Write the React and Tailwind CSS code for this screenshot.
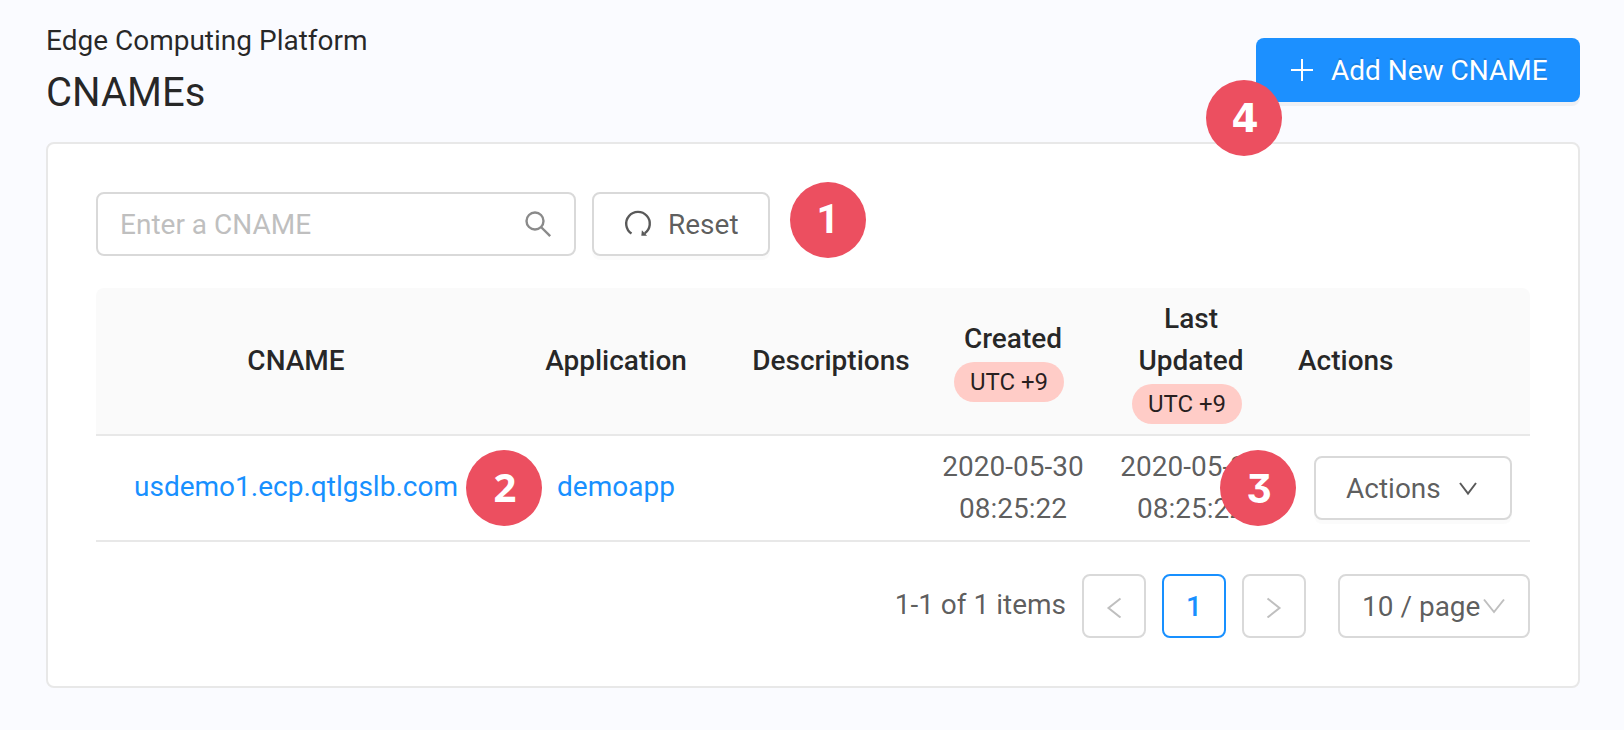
const shell = "flex items-center rounded-lg border-2 border-[#d9d9d9] bg-white";
const shadow = "shadow-[0_4px_0_rgba(0,0,0,0.016)]";

function Badge({ n, className }) {
  return (
    <span className={`absolute z-10 flex size-[76px] items-center justify-center rounded-full bg-[#ec4f60] leading-none font-bold text-white ${className}`}>
      {n}
    </span>
  );
}

function Chevron({ d, className }) {
  return (
    <svg viewBox="0 0 24 24" className={`size-6 shrink-0 ${className}`} fill="none" stroke="currentColor" strokeWidth="2">
      <path d={d} />
    </svg>
  );
}

function Tag() {
  return (
    <span className="mr-2 flex h-10 w-[110px] items-center justify-center rounded-full bg-[#ffccc7] text-2xl font-normal">
      UTC +9
    </span>
  );
}

export default function App() {
  return (
    <div className="h-[730px] w-[1624px] overflow-hidden bg-[#fafbff] pr-[44px] pl-[46px] font-[Roboto,sans-serif] text-[28px] leading-[42px] text-black/65">
      <header className="flex h-[142px] items-start justify-between text-black/85">
        <div className="pt-5">
          <p>Edge Computing Platform</p>
          <h1 className="mt-px text-[40px] leading-[60px]">CNAMEs</h1>
        </div>
        <div className="relative mt-[38px]">
          <button className="flex h-16 w-[324px] items-center rounded-lg bg-[#1c90ff] pl-[34px] text-white shadow-[0_4px_0_rgba(0,0,0,0.043)]">
            <svg viewBox="0 0 24 24" className="size-6 shrink-0" stroke="currentColor" strokeWidth="2">
              <path d="M12 1v22M1 12h22" />
            </svg>
            <span className="ml-[17px] pt-0.5 [text-shadow:0_-2px_0_rgba(0,0,0,0.12)]">Add New CNAME</span>
          </button>
          <Badge n="4" className="top-[42px] -left-[50px] pl-0.5 font-['DejaVu_Sans'] text-[39px]" />
        </div>
      </header>

      <main className="h-[546px] rounded-lg border-2 border-[#e8e8e8] bg-white px-12 pt-12">
        <div className="flex gap-4">
          <div className={`${shell} h-16 w-[480px] justify-between pr-[22px] pl-[22px]`}>
            <span className="pt-0.5 text-[#bfbfbf]">Enter a CNAME</span>
            <svg viewBox="0 0 28 28" className="size-7 text-[#8a8a8a]" fill="none" stroke="currentColor" strokeWidth="2.4">
              <circle cx="11" cy="11" r="8.5" />
              <path d="M17 17l9.200 9.200" />
            </svg>
          </div>
          <div className="relative">
            <button className={`${shell} ${shadow} h-16 w-[178px] pl-[30px]`}>
              <svg viewBox="0 0 28 28" className="size-7 shrink-0" fill="none" stroke="currentColor" strokeWidth="2.4">
                <path d="M7.500 23.500A11.800 11.800 0 1 1 20.800 23.300" />
                <path d="M17.300 25.800l.6-5.600 5.200 5.600z" fill="currentColor" stroke="none" />
              </svg>
              <span className="ml-4 pt-0.5">Reset</span>
            </button>
            <Badge n="1" className="-top-[10px] left-[198px] text-[40px]" />
          </div>
        </div>

        <table className="mt-8 w-[1434px] table-fixed border-separate border-spacing-0 text-center">
          <colgroup>
            <col className="w-[400px]" />
            <col className="w-[240px]" />
            <col className="w-[190px]" />
            <col className="w-[174px]" />
            <col className="w-[182px]" />
            <col className="w-[248px]" />
          </colgroup>
          <thead className="text-black/85 [&_th]:border-b-2 [&_th]:border-[#e8e8e8] [&_th]:bg-[#fafafa] [&_th]:font-medium">
            <tr className="h-[148px]">
              <th className="rounded-tl-lg">CNAME</th>
              <th>Application</th>
              <th>Descriptions</th>
              <th>
                <div className="flex flex-col items-center gap-0.5 pb-0.5">
                  Created
                  <Tag />
                </div>
              </th>
              <th>
                <div className="flex flex-col items-center gap-0.5">
                  <span>Last<br />Updated</span>
                  <Tag />
                </div>
              </th>
              <th className="rounded-tr-lg pl-4 text-left">Actions</th>
            </tr>
          </thead>
          <tbody className="[&_td]:border-b-2 [&_td]:border-[#e8e8e8]">
            <tr className="h-[106px]">
              <td className="relative pb-0.5 text-[#1890ff]">
                usdemo1.ecp.qtlgslb.com
                <Badge n="2" className="top-[14px] left-[370px] pb-0.5 pl-0.5 font-['Noto_Sans'] text-[40px]" />
              </td>
              <td className="pb-0.5 text-[#1890ff]">demoapp</td>
              <td />
              <td>2020-05-30<br />08:25:22</td>
              <td>2020-05-30<br />08:25:22</td>
              <td className="relative">
                <button className={`${shell} ${shadow} ml-8 h-16 w-[198px] pl-[30px]`}>
                  <span className="pt-0.5">Actions</span>
                  <Chevron d="M4 7l8 10.500 8-10.500" className="ml-[15px]" />
                </button>
                <Badge n="3" className="top-[14px] -left-[62px] pl-0.5 font-['Inter'] text-[39px] [font-feature-settings:'cv09','ss01','cv04']" />
              </td>
            </tr>
          </tbody>
        </table>

        <nav className="mt-8 flex h-16 justify-end">
          <span className="mt-[10px] mr-4">1-1 of 1 items</span>
          <span className={`${shell} w-16 justify-center text-[#bfbfbf]`}>
            <Chevron d="M18.500 4.500L6.500 14l12 9.500" className="" />
          </span>
          <span className="ml-4 flex w-16 items-center justify-center rounded-lg border-2 border-[#1890ff] pt-0.5 font-medium text-[#1890ff]">1</span>
          <span className={`${shell} ml-4 w-16 justify-center text-[#bfbfbf]`}>
            <Chevron d="M5.500 4.500l12 9.500-12 9.500" className="" />
          </span>
          <span className={`${shell} ml-8 w-[192px] pl-[22px]`}>
            <span className="pt-0.5">10 / page</span>
            <Chevron d="M2 5.500l10 12.500 10-12.500" className="ml-0.5 text-[#bfbfbf]" />
          </span>
        </nav>
      </main>
    </div>
  );
}
